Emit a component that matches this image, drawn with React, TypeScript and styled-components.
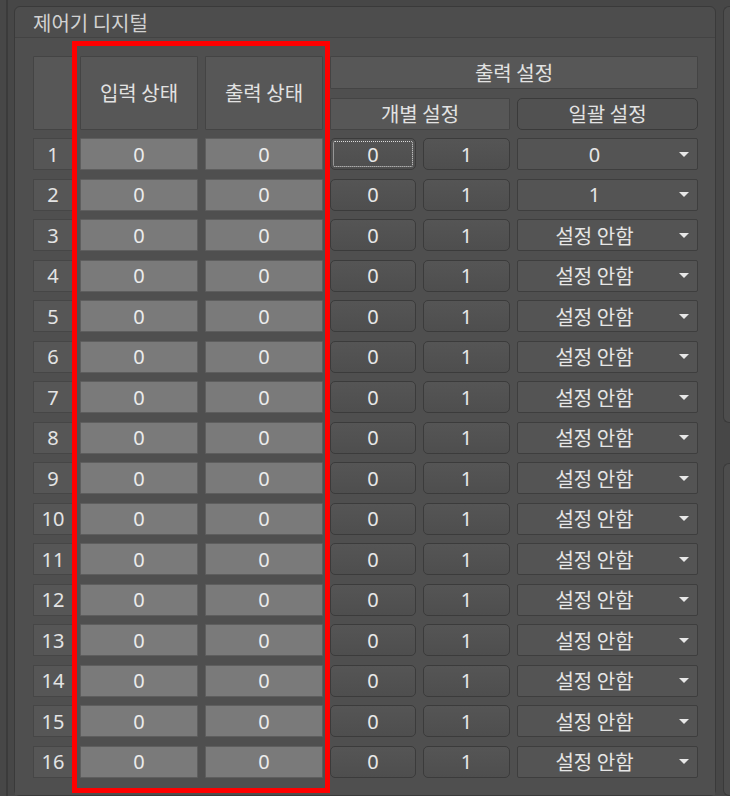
import React from "react";
import styled, { createGlobalStyle } from "styled-components";

const GlobalStyle = createGlobalStyle`
  * {
    box-sizing: border-box;
  }
  body {
    margin: 0;
    background: #474747;
    font-family: "Noto Sans", "Noto Sans CJK KR", sans-serif;
    color: #e4e4e4;
  }
`;

const Page = styled.div`
  position: relative;
  display: flex;
  width: 730px;
  height: 796px;
  overflow: hidden;
  background: #474747;
`;

const LeftRail = styled.div`
  width: 8px;
  margin-right: 6px;
  border-right: 2px solid #3b3b3b;
`;

const GroupBox = styled.div`
  display: flex;
  flex-direction: column;
  width: 702px;
  margin-top: 6px;
  border: 1px solid #3a3a3a;
  border-radius: 6px;
  background: #4d4d4d;
`;

const GroupHeader = styled.div`
  display: flex;
  align-items: center;
  height: 31px;
  padding-left: 18px;
  border-bottom: 1px solid #434343;
  font-family: "Noto Sans CJK KR", sans-serif;
  font-size: 20px;
  color: #d2d2d2;
`;

const GroupBody = styled.div`
  padding: 18px 0 0 18px;
  background: #4f4f4f;
  flex: 1;
`;

const RightColumn = styled.div`
  display: flex;
  flex-direction: column;
  gap: 40px;
  margin-left: 7px;
  margin-top: 6px;
  flex: 1;
`;

const SidePanel = styled.div<{ $height?: number }>`
  flex: ${(p) => (p.$height ? `0 0 ${p.$height}px` : "1")};
  border: 1px solid #3a3a3a;
  border-right: none;
  border-radius: 6px 0 0 6px;
  background: #4d4d4d;
`;

const Table = styled.div`
  display: grid;
  grid-template-columns: 40px 118px 118px 86px 87px 181px;
  grid-template-rows: 33px 32px repeat(16, 32px);
  column-gap: 7px;
  row-gap: 8.5px;
`;

const HeaderCell = styled.div<{ $col?: string; $row?: string; $rounded?: boolean }>`
  grid-column: ${(p) => p.$col ?? "auto"};
  grid-row: ${(p) => p.$row ?? "auto"};
  display: flex;
  align-items: center;
  justify-content: center;
  background: ${(p) => (p.$rounded ? "#515151" : "#575757")};
  border: 1px solid ${(p) => (p.$rounded ? "#3a3a3a" : "#444444")};
  border-radius: ${(p) => (p.$rounded ? "5px" : "1px")};
  font-family: "Noto Sans CJK KR", sans-serif;
  font-size: 20px;
  color: #e2e2e2;
`;

const NumCell = styled.div`
  display: flex;
  align-items: center;
  justify-content: center;
  background: #565656;
  border: 1px solid #464646;
  font-size: 20px;
`;

const StateCell = styled.div`
  display: flex;
  align-items: center;
  justify-content: center;
  background: #7a7a7a;
  border: 1px solid #5e5e5e;
  border-radius: 1px;
  font-size: 20px;
  color: #ececec;
`;

const SetButton = styled.div<{ $focused?: boolean }>`
  display: flex;
  align-items: center;
  justify-content: center;
  background: linear-gradient(#555555, #4e4e4e);
  border: 1px solid #3b3b3b;
  border-radius: 5px;
  font-size: 20px;
  color: #e8e8e8;
  outline: ${(p) => (p.$focused ? "1px dotted #dcdcdc" : "none")};
  outline-offset: -4px;
`;

const Dropdown = styled.div`
  display: flex;
  align-items: center;
  background: #545454;
  border: 1px solid #3e3e3e;
  border-radius: 2px;
`;

const DropdownValue = styled.span<{ $digits?: boolean }>`
  flex: 1;
  text-align: center;
  font-family: ${(p) =>
    p.$digits ? `"Noto Sans", sans-serif` : `"Noto Sans CJK KR", sans-serif`};
  font-size: 20px;
  color: #e6e6e6;
`;

const Arrow = styled.span`
  width: 26px;
  display: flex;
  justify-content: center;
  &::after {
    content: "";
    border-left: 5px solid transparent;
    border-right: 5px solid transparent;
    border-top: 5px solid #e8e8e8;
  }
`;

const Highlight = styled.div`
  position: absolute;
  left: 72px;
  top: 41px;
  width: 258px;
  height: 752px;
  border: 5px solid #ff0000;
  pointer-events: none;
`;

const bulk = (i: number) => (i === 0 ? "0" : i === 1 ? "1" : "설정 안함");

const App = () => {
  const rows = Array.from({ length: 16 }, (_, i) => i);
  return (
    <>
      <GlobalStyle />
      <Page>
        <LeftRail />
        <GroupBox>
          <GroupHeader>제어기 디지털</GroupHeader>
          <GroupBody>
            <Table>
              <HeaderCell $col="1" $row="1 / 3" />
              <HeaderCell $col="2" $row="1 / 3">입력 상태</HeaderCell>
              <HeaderCell $col="3" $row="1 / 3">출력 상태</HeaderCell>
              <HeaderCell $col="4 / 7" $row="1">출력 설정</HeaderCell>
              <HeaderCell $col="4 / 6" $row="2">개별 설정</HeaderCell>
              <HeaderCell $col="6" $row="2" $rounded>일괄 설정</HeaderCell>
              {rows.map((i) => (
                <React.Fragment key={i}>
                  <NumCell>{i + 1}</NumCell>
                  <StateCell>0</StateCell>
                  <StateCell>0</StateCell>
                  <SetButton $focused={i === 0}>0</SetButton>
                  <SetButton>1</SetButton>
                  <Dropdown>
                    <DropdownValue $digits={i < 2}>{bulk(i)}</DropdownValue>
                    <Arrow />
                  </Dropdown>
                </React.Fragment>
              ))}
            </Table>
          </GroupBody>
        </GroupBox>
        <RightColumn>
          <SidePanel $height={417} />
          <SidePanel />
        </RightColumn>
        <Highlight />
      </Page>
    </>
  );
};

export default App;
